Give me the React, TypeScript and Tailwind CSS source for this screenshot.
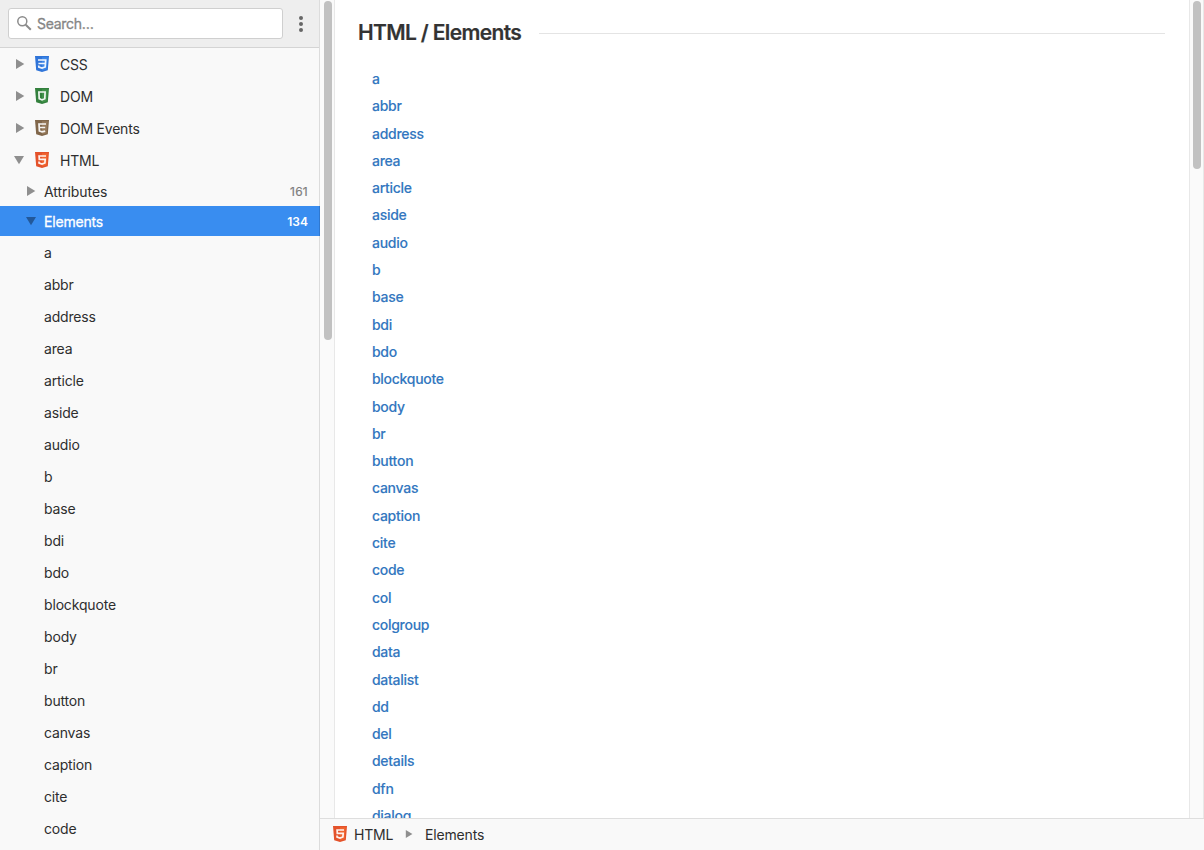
import React from "react";

type Kind = "css" | "dom" | "events" | "html";

const shields: Record<Kind, { dark: string; light: string; glyph: string }> = {
  css: { dark: "#2f74d8", light: "#3c87e8", glyph: "M3 4H10.7L10.2 11L7 12.1L3.9 11.1L3.7 9.5M3.4 7.5H10.2" },
  dom: { dark: "#33803d", light: "#41924a", glyph: "M3.9 4H10.1L9.8 10.6L7 11.9L4.2 10.6Z" },
  events: { dark: "#80664a", light: "#967a5b", glyph: "M11 4H4L4.4 11L7 11.9L10.2 11.1M4.4 7.5H10.2" },
  html: { dark: "#e4522a", light: "#f0652f", glyph: "M11 4H4.1L4.3 7.3H10.2L9.9 11L7 12L4.1 11.1L4 9.5" },
};

function Shield({ kind }: { kind: Kind }) {
  const s = shields[kind];
  return (
    <svg className="h-4 w-3.5 shrink-0" viewBox="0 0 14 16" fill="none">
      <path d="M0 0H14L12.8 14.2L7 16L1.2 14.2Z" fill={s.dark} />
      <path d="M7 1.3H12.7L11.6 13.2L7 14.6Z" fill={s.light} />
      <path d={s.glyph} stroke="#fff" strokeOpacity="0.92" strokeWidth="1.7" />
    </svg>
  );
}

function Arrow({ open, className }: { open?: boolean; className: string }) {
  return (
    <svg className={`shrink-0 ${className}`} viewBox="0 0 10 10" fill="currentColor">
      <path d={open ? "M0 1H10L5 9.3Z" : "M1 0L9.3 5L1 10Z"} />
    </svg>
  );
}

const docs: { kind: Kind; name: string; open?: boolean }[] = [
  { kind: "css", name: "CSS" },
  { kind: "dom", name: "DOM" },
  { kind: "events", name: "DOM Events" },
  { kind: "html", name: "HTML", open: true },
];

const elements = [
  "a", "abbr", "address", "area", "article", "aside", "audio", "b", "base", "bdi", "bdo",
  "blockquote", "body", "br", "button", "canvas", "caption", "cite", "code", "col",
  "colgroup", "data", "datalist", "dd", "del", "details", "dfn", "dialog",
];

function Sidebar() {
  return (
    <aside className="flex w-80 shrink-0 flex-col border-r border-[#dcdcdc] bg-[#f9f9f9]">
      <header className="flex h-12 shrink-0 items-center border-b border-[#d4d4d4] bg-[#eeeeee] pl-2">
        <div className="flex h-[31px] w-[275px] items-center rounded-[3px] border border-[#cfcfcf] bg-white pl-2">
          <svg className="h-[15px] w-[15px]" viewBox="0 0 15 15" fill="none" stroke="#8b8b8b">
            <circle cx="5.3" cy="5.3" r="4.5" strokeWidth="1.5" />
            <path d="M8.7 8.7L13.8 13.8" strokeWidth="2" />
          </svg>
          <span className="ml-[5px] tracking-[-0.02em] text-[#858585] [-webkit-text-stroke:0.3px_#858585]">Search…</span>
        </div>
        <svg className="ml-4 h-4 w-1" viewBox="0 0 4 16" fill="#666">
          <circle cx="2" cy="2" r="2" />
          <circle cx="2" cy="8" r="2" />
          <circle cx="2" cy="14" r="2" />
        </svg>
      </header>
      <nav className="-mr-px min-h-0 flex-1 overflow-hidden">
        {docs.map((d) => (
          <div key={d.name} className="flex h-8 items-center">
            <Arrow open={d.open} className={d.open ? "ml-3.5 mr-[11px] h-2.5 w-2.5 text-[#8f8f8f]" : "ml-[15px] mr-2.5 h-2.5 w-2.5 text-[#8f8f8f]"} />
            <Shield kind={d.kind} />
            <span className="ml-[11px] pt-0.5 tracking-[-0.015em]">{d.name}</span>
          </div>
        ))}
        <div className="flex h-[30px] items-center pr-3">
          <Arrow className="ml-[26px] mr-2 h-2.5 w-2.5 text-[#8f8f8f]" />
          <span className="flex-1 pt-0.5 tracking-[-0.004em]">Attributes</span>
          <span className="pt-0.5 text-xs tracking-[0.02em] text-[#7d7d7d] [-webkit-text-stroke:0.2px_#7d7d7d]">161</span>
        </div>
        <div className="flex h-[30px] items-center border-r border-[#2f78d0] bg-[#398df0] pr-[11px] text-white">
          <Arrow open className="ml-[26px] mr-2 h-2.5 w-2.5 text-[#22589a]" />
          <span className="flex-1 pt-0.5 tracking-[-0.013em] [-webkit-text-stroke:0.3px_white]">Elements</span>
          <span className="pt-0.5 text-xs font-semibold tracking-normal">134</span>
        </div>
        {elements.slice(0, 19).map((e) => (
          <div key={e} className="flex h-8 items-center pl-11 pt-0.5 tracking-[-0.012em]">{e}</div>
        ))}
      </nav>
    </aside>
  );
}

export default function App() {
  return (
    <div className="flex h-[850px] w-[1204px] overflow-hidden bg-white font-['Inter',sans-serif] text-[14px] leading-5 tracking-[-0.01em] text-[#2e2e2e]">
      <Sidebar />
      <div className="flex min-w-0 flex-1 flex-col">
        <div className="flex min-h-0 flex-1">
          <div className="w-[15px] shrink-0 border-r border-[#e8e8e8] bg-[#fafafa] pl-1 pt-px">
            <div className="h-[339px] w-2 rounded-full bg-[#c1c1c1]" />
          </div>
          <main className="min-w-0 flex-1 overflow-hidden pl-[23px] pr-6">
            <div className="flex h-[65px] items-center pt-px">
              <h1 className="text-[21px] font-semibold leading-7 tracking-[-0.031em] text-[#333] [-webkit-text-stroke:0.2px_#333]">HTML / Elements</h1>
              <div className="ml-[18px] mt-px h-px flex-1 bg-[#e4e4e4]" />
            </div>
            <ul className="pl-3.5">
              {elements.map((e) => (
                <li key={e} className="h-[27.3px] font-medium leading-[27.3px] tracking-[-0.02em] text-[#3377c0] [-webkit-text-stroke:0.1px_#3377c0]">{e}</li>
              ))}
            </ul>
          </main>
          <div className="w-[15px] shrink-0 border-x border-[#e8e8e8] bg-[#fafafa] pl-[3px] pt-px">
            <div className="h-[168px] w-2 rounded-full bg-[#c1c1c1]" />
          </div>
        </div>
        <footer className="flex h-8 shrink-0 items-center border-t border-[#dedede] bg-[#f9f9f9] pb-px pl-[13px]">
          <Shield kind="html" />
          <span className="ml-[7px] pt-0.5 tracking-[-0.016em]">HTML</span>
          <Arrow className="ml-3 mr-3 h-2 w-2 text-[#8f8f8f]" />
          <span className="pt-0.5 tracking-[-0.013em]">Elements</span>
        </footer>
      </div>
    </div>
  );
}
